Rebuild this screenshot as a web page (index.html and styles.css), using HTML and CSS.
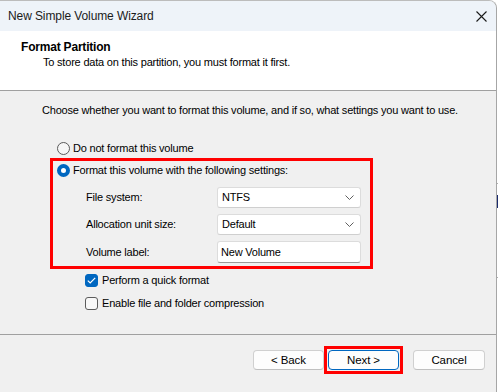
FILE: index.html
```html
<!DOCTYPE html>
<html lang="en">
<head>
<meta charset="utf-8">
<title>New Simple Volume Wizard</title>
<link rel="stylesheet" href="styles.css">
</head>
<body>
<div class="screen">
  <div class="window">
    <div class="titlebar">
      <span class="title">New Simple Volume Wizard</span>
      <svg class="close" width="11" height="11" viewBox="0 0 11 11"><path d="M0.5 0.5 L10.5 10.5 M10.5 0.5 L0.5 10.5" stroke="#1a1a1a" stroke-width="1.1" fill="none"/></svg>
    </div>
    <div class="header">
      <div class="h-title">Format Partition</div>
      <div class="h-sub">To store data on this partition, you must format it first.</div>
    </div>
    <div class="content">
      <p class="intro">Choose whether you want to format this volume, and if so, what settings you want to use.</p>
      <div class="options">
        <div class="radio-row r1"><span class="radio"></span><span>Do not format this volume</span></div>
        <div class="group">
          <div class="radio-row"><span class="radio on"></span><span>Format this volume with the following settings:</span></div>
          <div class="fields">
            <span class="flabel">File system:</span>
            <div class="select"><span>NTFS</span><svg class="chev" width="9" height="5" viewBox="0 0 9 5"><path d="M0.5 0.5 L4.5 4.5 L8.5 0.5" stroke="#5f5f5f" stroke-width="1" fill="none"/></svg></div>
            <span class="flabel">Allocation unit size:</span>
            <div class="select"><span>Default</span><svg class="chev" width="9" height="5" viewBox="0 0 9 5"><path d="M0.5 0.5 L4.5 4.5 L8.5 0.5" stroke="#5f5f5f" stroke-width="1" fill="none"/></svg></div>
            <span class="flabel">Volume label:</span>
            <div class="input">New Volume</div>
          </div>
        </div>
        <div class="check-row first"><span class="check on"><svg width="9" height="7" viewBox="0 0 9 7"><path d="M0.8 3.6 L3.2 6 L8.2 0.8" stroke="#fff" stroke-width="1.2" fill="none"/></svg></span><span>Perform a quick format</span></div>
        <div class="check-row"><span class="check"></span><span>Enable file and folder compression</span></div>
      </div>
    </div>
    <div class="footer">
      <button class="btn back">&lt; Back</button>
      <div class="hl"><button class="btn next">Next &gt;</button></div>
      <button class="btn cancel">Cancel</button>
    </div>
  </div>
  <div class="edge">
    <span class="e1"></span>
    <span class="e2"></span>
    <span class="e3"></span>
  </div>
</div>
</body>
</html>
```

FILE: styles.css
```css
html, body {
  margin: 0;
  padding: 0;
}
body {
  font-family: "Liberation Sans", Arial, sans-serif;
  font-size: 11px;
  letter-spacing: -0.2px;
  color: #000;
  background: #ffffff;
}
.screen {
  display: flex;
  width: 498px;
  height: 392px;
  overflow: hidden;
}
.window {
  width: 497px;
  height: 392px;
  flex: none;
  box-sizing: border-box;
  border-top: 1px solid #bcbcbc;
  border-right: 1px solid #a6a6a6;
  border-top-right-radius: 8px;
  display: flex;
  flex-direction: column;
  overflow: hidden;
  background: #f0f0f0;
}
.titlebar {
  height: 30px;
  flex: none;
  background: #eef3f9;
  display: flex;
  align-items: center;
  justify-content: space-between;
  padding: 0 9px 0 8px;
}
.title {
  color: #1b1b1b;
  font-size: 12px;
  letter-spacing: -0.1px;
}
.close {
  display: block;
}
.header {
  height: 50px;
  flex: none;
  background: #ffffff;
  border-bottom: 1px solid #a0a0a0;
  padding: 9px 0 0 21px;
  line-height: 15px;
}
.h-title {
  font-weight: bold;
  font-size: 12px;
  letter-spacing: -0.2px;
}
.h-sub {
  margin-left: 22px;
}
.content {
  flex: 1;
  padding: 12px 0 0 42px;
  line-height: 15px;
}
.intro {
  margin: 0;
  height: 15px;
}
.options {
  margin: 22px 0 0 8px;
}
.radio-row {
  display: flex;
  align-items: center;
  height: 17px;
  gap: 3px;
}
.r1 {
  margin-left: 7px;
}
.radio {
  width: 13px;
  height: 13px;
  box-sizing: border-box;
  border-radius: 50%;
  border: 1px solid #5a5a5a;
  background: #f6f6f6;
  flex: none;
}
.radio.on {
  border: 4px solid #0067c0;
  background: #ffffff;
}
.group {
  margin-top: 1px;
  width: 323px;
  box-sizing: border-box;
  border: 3px solid #ff0000;
  padding: 1px 0 3px 4px;
}
.fields {
  margin: 8px 0 0 29px;
  display: grid;
  grid-template-columns: 131px 144px;
  grid-template-rows: 21px 21px 22px;
  row-gap: 6px;
  align-items: center;
}
.flabel {
  color: #000;
}
.select, .input {
  height: 100%;
  box-sizing: border-box;
  background: #ffffff;
  border: 1px solid #dcdcdc;
  border-radius: 3px;
  display: flex;
  align-items: center;
  justify-content: space-between;
  padding: 0 6px 0 4px;
}
.select {
  border-bottom-color: #cfcfcf;
}
.input {
  border-bottom-color: #9a9a9a;
  padding-left: 3px;
}
.chev {
  display: block;
}
.check-row {
  display: flex;
  align-items: center;
  height: 17px;
  gap: 4px;
  margin: 6px 0 0 35px;
}
.check-row.first {
  margin-top: 3px;
}
.check {
  width: 13px;
  height: 13px;
  box-sizing: border-box;
  border: 1px solid #5c5c5c;
  border-radius: 3px;
  background: #f8f8f8;
  flex: none;
  display: flex;
  align-items: center;
  justify-content: center;
}
.check.on {
  border-color: #0067c0;
  background: #0067c0;
}
.footer {
  height: 46px;
  flex: none;
  border-top: 1px solid #a0a0a0;
  display: flex;
  justify-content: flex-end;
  align-items: flex-start;
  padding: 11px 11px 0 0;
}
.btn {
  font-family: "Liberation Sans", Arial, sans-serif;
  font-size: 11.5px;
  letter-spacing: -0.1px;
  color: #000;
  height: 20px;
  box-sizing: border-box;
  background: #fdfdfd;
  border: 1px solid #d0d0d0;
  border-bottom-color: #c0c0c0;
  border-radius: 4px;
  padding: 0;
  margin: 0;
  line-height: 18px;
}
.back {
  width: 71px;
  margin-top: 4px;
}
.hl {
  border: 3px solid #ff0000;
  padding: 1px;
  display: flex;
}
.next {
  width: 71px;
  border-color: #0067c0;
}
.cancel {
  width: 72px;
  margin: 4px 0 0 10px;
}
.edge {
  width: 1px;
  flex: none;
  display: flex;
  flex-direction: column;
}
.e1 {
  margin-top: 183px;
  height: 1px;
  background: #b0b0b0;
}
.e2 {
  margin-top: 11px;
  height: 13px;
  background: #1a2a6c;
}
.e3 {
  margin-top: 69px;
  height: 1px;
  background: #b0b0b0;
}
```
